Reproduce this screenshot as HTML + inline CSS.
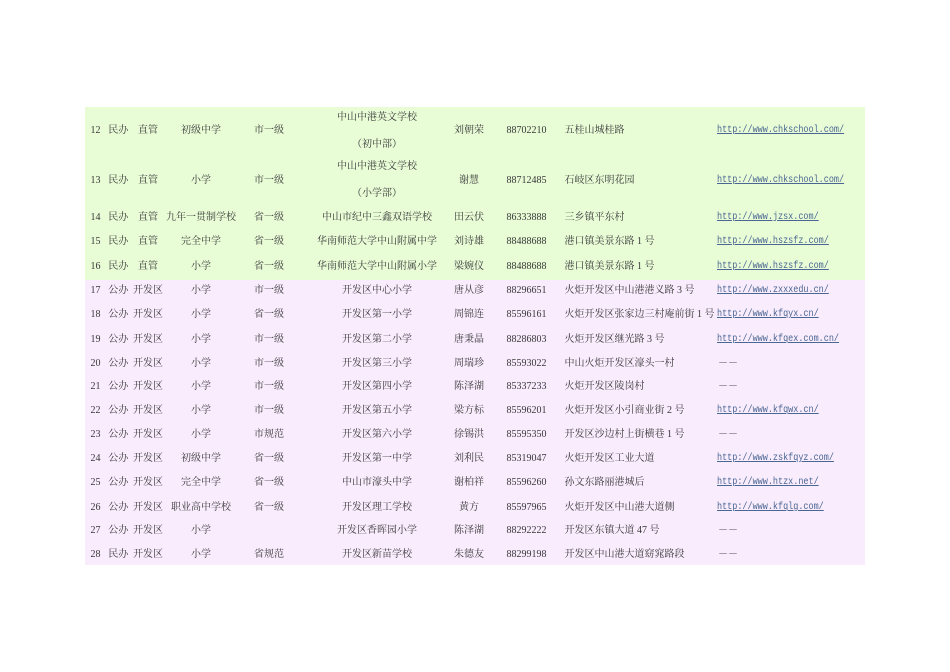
<!DOCTYPE html>
<html lang="zh">
<head>
<meta charset="utf-8">
<style>
html,body{margin:0;padding:0;background:#fff}
#p{position:relative;width:950px;height:672px;overflow:hidden;background:#fff;font-family:"Liberation Serif","Noto Serif CJK SC",serif;font-size:10px;color:#383838;filter:blur(.3px)}
.g,.k{position:absolute;left:85px;width:780px}
.g{top:107px;height:173px;background:#e8fcd6}
.k{top:280px;height:285px;background:#f9ecfd}
.r{position:absolute;left:0;width:950px;height:16px;line-height:16px;white-space:nowrap;margin-top:2px}
.r span,.r a{position:absolute;top:0}
.a{left:85px;width:21px;text-align:center}
.b{left:105.3px;width:26px;text-align:center}
.c{left:132px;width:32px;text-align:center}
.d{left:164px;width:74px;text-align:center}
.e{left:238px;width:62px;text-align:center}
.f{left:300px;width:154px;text-align:center}
.h{left:454px;width:30px;text-align:center}
.i{left:506.5px}
.j{left:564.5px}
.r a{left:717px;font-family:"Liberation Mono",monospace;font-size:10px;color:#4a6692;text-decoration:underline;transform:scaleX(.847);transform-origin:0 50%}
.r .l{left:718px;color:#3a3a3a}
</style>
</head>
<body>
<div id="p">
<div class="g"></div><div class="k"></div>

<div class="r" style="top:108px"><span class="f">中山中港英文学校</span></div>
<div class="r" style="top:135px"><span class="f">（初中部）</span></div>
<div class="r" style="top:121px"><span class="a">12</span><span class="b">民办</span><span class="c">直管</span><span class="d">初级中学</span><span class="e">市一级</span><span class="h">刘朝荣</span><span class="i">88702210</span><span class="j">五桂山城桂路</span><a>http://www.chkschool.com/</a></div>

<div class="r" style="top:157px"><span class="f">中山中港英文学校</span></div>
<div class="r" style="top:184px"><span class="f">（小学部）</span></div>
<div class="r" style="top:171px"><span class="a">13</span><span class="b">民办</span><span class="c">直管</span><span class="d">小学</span><span class="e">市一级</span><span class="h">谢慧</span><span class="i">88712485</span><span class="j">石岐区东明花园</span><a>http://www.chkschool.com/</a></div>

<div class="r" style="top:208px"><span class="a">14</span><span class="b">民办</span><span class="c">直管</span><span class="d">九年一贯制学校</span><span class="e">省一级</span><span class="f">中山市纪中三鑫双语学校</span><span class="h">田云伏</span><span class="i">86333888</span><span class="j">三乡镇平东村</span><a>http://www.jzsx.com/</a></div>

<div class="r" style="top:232px"><span class="a">15</span><span class="b">民办</span><span class="c">直管</span><span class="d">完全中学</span><span class="e">省一级</span><span class="f">华南师范大学中山附属中学</span><span class="h">刘诗雄</span><span class="i">88488688</span><span class="j">港口镇美景东路 1 号</span><a>http://www.hszsfz.com/</a></div>

<div class="r" style="top:257px"><span class="a">16</span><span class="b">民办</span><span class="c">直管</span><span class="d">小学</span><span class="e">省一级</span><span class="f">华南师范大学中山附属小学</span><span class="h">梁婉仪</span><span class="i">88488688</span><span class="j">港口镇美景东路 1 号</span><a>http://www.hszsfz.com/</a></div>

<div class="r" style="top:281px"><span class="a">17</span><span class="b">公办</span><span class="c">开发区</span><span class="d">小学</span><span class="e">市一级</span><span class="f">开发区中心小学</span><span class="h">唐从彦</span><span class="i">88296651</span><span class="j">火炬开发区中山港港义路 3 号</span><a>http://www.zxxxedu.cn/</a></div>

<div class="r" style="top:305px"><span class="a">18</span><span class="b">公办</span><span class="c">开发区</span><span class="d">小学</span><span class="e">省一级</span><span class="f">开发区第一小学</span><span class="h">周锦连</span><span class="i">85596161</span><span class="j">火炬开发区张家边三村庵前街 1 号</span><a>http://www.kfqyx.cn/</a></div>

<div class="r" style="top:330px"><span class="a">19</span><span class="b">公办</span><span class="c">开发区</span><span class="d">小学</span><span class="e">市一级</span><span class="f">开发区第二小学</span><span class="h">唐秉晶</span><span class="i">88286803</span><span class="j">火炬开发区继光路 3 号</span><a>http://www.kfqex.com.cn/</a></div>

<div class="r" style="top:354px"><span class="a">20</span><span class="b">公办</span><span class="c">开发区</span><span class="d">小学</span><span class="e">市一级</span><span class="f">开发区第三小学</span><span class="h">周瑞珍</span><span class="i">85593022</span><span class="j">中山火炬开发区濠头一村</span><span class="l">－－</span></div>

<div class="r" style="top:377px"><span class="a">21</span><span class="b">公办</span><span class="c">开发区</span><span class="d">小学</span><span class="e">市一级</span><span class="f">开发区第四小学</span><span class="h">陈泽湖</span><span class="i">85337233</span><span class="j">火炬开发区陵岗村</span><span class="l">－－</span></div>

<div class="r" style="top:401px"><span class="a">22</span><span class="b">公办</span><span class="c">开发区</span><span class="d">小学</span><span class="e">市一级</span><span class="f">开发区第五小学</span><span class="h">梁方标</span><span class="i">85596201</span><span class="j">火炬开发区小引商业街 2 号</span><a>http://www.kfqwx.cn/</a></div>

<div class="r" style="top:425px"><span class="a">23</span><span class="b">公办</span><span class="c">开发区</span><span class="d">小学</span><span class="e">市规范</span><span class="f">开发区第六小学</span><span class="h">徐锡洪</span><span class="i">85595350</span><span class="j">开发区沙边村上街横巷 1 号</span><span class="l">－－</span></div>

<div class="r" style="top:449px"><span class="a">24</span><span class="b">公办</span><span class="c">开发区</span><span class="d">初级中学</span><span class="e">省一级</span><span class="f">开发区第一中学</span><span class="h">刘利民</span><span class="i">85319047</span><span class="j">火炬开发区工业大道</span><a>http://www.zskfqyz.com/</a></div>

<div class="r" style="top:473px"><span class="a">25</span><span class="b">公办</span><span class="c">开发区</span><span class="d">完全中学</span><span class="e">省一级</span><span class="f">中山市濠头中学</span><span class="h">谢柏祥</span><span class="i">85596260</span><span class="j">孙文东路丽港城后</span><a>http://www.htzx.net/</a></div>

<div class="r" style="top:498px"><span class="a">26</span><span class="b">公办</span><span class="c">开发区</span><span class="d">职业高中学校</span><span class="e">省一级</span><span class="f">开发区理工学校</span><span class="h">黄方</span><span class="i">85597965</span><span class="j">火炬开发区中山港大道侧</span><a>http://www.kfqlg.com/</a></div>

<div class="r" style="top:521px"><span class="a">27</span><span class="b">公办</span><span class="c">开发区</span><span class="d">小学</span><span class="f">开发区香晖园小学</span><span class="h">陈泽湖</span><span class="i">88292222</span><span class="j">开发区东镇大道 47 号</span><span class="l">－－</span></div>

<div class="r" style="top:545px"><span class="a">28</span><span class="b">民办</span><span class="c">开发区</span><span class="d">小学</span><span class="e">省规范</span><span class="f">开发区新苗学校</span><span class="h">朱德友</span><span class="i">88299198</span><span class="j">开发区中山港大道窈窕路段</span><span class="l">－－</span></div>
</div>
</body>
</html>
